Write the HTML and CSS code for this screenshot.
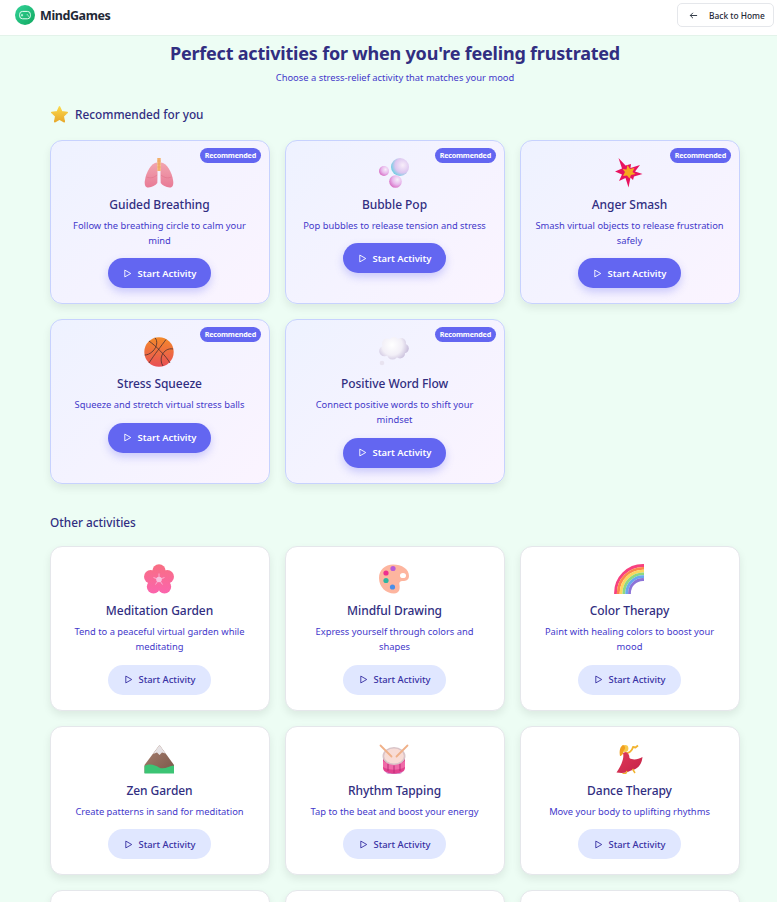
FILE: index.html
```html
<!DOCTYPE html>
<html lang="en">
<head>
<meta charset="utf-8">
<title>MindGames</title>
<link rel="stylesheet" href="styles.css">
</head>
<body>
<svg class="defs" aria-hidden="true">
  <defs>
    <symbol id="play" viewBox="0 0 10 10"><path d="M2 1.2 8.6 5 2 8.8Z" fill="none" stroke="currentColor" stroke-width="1" stroke-linejoin="round"/></symbol>
    <linearGradient id="gLung" x1="0" y1="0" x2="0" y2="1"><stop offset="0" stop-color="#f2a6b0"/><stop offset="1" stop-color="#e87a96"/></linearGradient>
    <radialGradient id="gBub" cx=".65" cy=".35" r=".7"><stop offset="0" stop-color="#f6effa"/><stop offset=".55" stop-color="#e8b8ec"/><stop offset="1" stop-color="#d86fc4"/></radialGradient>
    <radialGradient id="gBub2" cx=".65" cy=".4" r=".7"><stop offset="0" stop-color="#f8eefa"/><stop offset=".6" stop-color="#dcc6f0"/><stop offset="1" stop-color="#5fd0e0"/></radialGradient>
    <linearGradient id="gBall" x1="0" y1="0" x2="0" y2="1"><stop offset="0" stop-color="#f48a2a"/><stop offset="1" stop-color="#e84f55"/></linearGradient>
    <radialGradient id="gCloud" gradientUnits="userSpaceOnUse" cx="13" cy="8" r="17"><stop offset="0" stop-color="#ffffff"/><stop offset=".6" stop-color="#f2eff7"/><stop offset="1" stop-color="#c9bfdc"/></radialGradient>
    <linearGradient id="gFlower" gradientUnits="userSpaceOnUse" x1="0" y1="0" x2="0" y2="30"><stop offset="0" stop-color="#f86f82"/><stop offset="1" stop-color="#fb64ae"/></linearGradient>
    <linearGradient id="gMount" x1="0" y1="0" x2="1" y2="1"><stop offset="0" stop-color="#a88070"/><stop offset="1" stop-color="#7a5648"/></linearGradient>
    <linearGradient id="gStar" x1="0" y1="0" x2="0" y2="1"><stop offset="0" stop-color="#fbd84a"/><stop offset="1" stop-color="#e8a92c"/></linearGradient>
    <linearGradient id="gDress" x1="0" y1="0" x2="1" y2="1"><stop offset="0" stop-color="#e03a58"/><stop offset="1" stop-color="#c42248"/></linearGradient>
  </defs>
</svg>

<header class="topbar">
  <div class="brand">
    <span class="logo">
      <svg viewBox="0 0 20 20" class="logo-svg"><rect x="4.6" y="6.4" width="10.8" height="7.4" rx="3" fill="none" stroke="#e6fff3" stroke-width="1"/><path d="M7 9v2.4M5.900 10.200h2.200" stroke="#e6fff3" stroke-width=".8"/><circle cx="12.200" cy="9.800" r=".6" fill="#e6fff3"/><circle cx="13.400" cy="11" r=".6" fill="#e6fff3"/></svg>
    </span>
    <span class="brand-name">MindGames</span>
  </div>
  <button class="back">
    <svg viewBox="0 0 10 10" class="back-icon"><path d="M9 5H1.400M4.400 2 1.400 5l3 3" fill="none" stroke="#1f2937" stroke-width="1"/></svg>
    <span>Back to Home</span>
  </button>
</header>

<main class="page">
  <h1 class="title">Perfect activities for when you're feeling frustrated</h1>
  <p class="subtitle">Choose a stress-relief activity that matches your mood</p>

  <h2 class="section section-rec">
    <svg viewBox="0 0 16 16" class="star"><path d="M8 .8 10.100 5.500 15.300 6.100 11.500 9.600 12.500 14.800 8 12.300 3.500 14.800 4.500 9.600.7 6.100 5.900 5.500Z" fill="url(#gStar)" stroke="url(#gStar)" stroke-width="1.400" stroke-linejoin="round"/></svg>
    Recommended for you
  </h2>

  <div class="grid">
    <article class="card rec">
      <span class="badge">Recommended</span>
      <div class="icon"><svg viewBox="0 0 30 30" class="art">
        <path d="M13 4.500C7.500 4.500 2 14 .8 23c-.5 4 .7 6.800 3.700 6.500 3.500-.5 7-2 8.800-4.500.3-7 .3-15-.3-20.500Z" fill="url(#gLung)"/>
        <path d="M17 4.500C22.500 4.500 28 14 29.200 23c.5 4-.7 6.800-3.700 6.500-3.500-.5-7-2-8.800-4.500-.3-7-.3-15 .3-20.500Z" fill="url(#gLung)"/>
        <path d="M2.500 19c3.500 1.500 7 1 10.500-2M27.500 19c-3.500 1.500-7 1-10.500-2" stroke="#dc6f86" stroke-width=".5" fill="none"/>
        <rect x="13.300" y="0" width="3.400" height="13" fill="#f2b06c"/>
        <path d="M13.300 3h3.400M13.300 6h3.400M13.300 9h3.400" stroke="#e89a58" stroke-width=".5"/>
      </svg></div>
      <h3 class="name">Guided Breathing</h3>
      <p class="desc">Follow the breathing circle to calm your mind</p>
      <button class="start primary"><svg class="play"><use href="#play"/></svg>Start Activity</button>
    </article>

    <article class="card rec">
      <span class="badge">Recommended</span>
      <div class="icon"><svg viewBox="0 0 30 30" class="art">
        <circle cx="21" cy="9" r="9" fill="url(#gBub2)"/>
        <circle cx="5" cy="13" r="5" fill="url(#gBub)"/>
        <circle cx="16.500" cy="23.500" r="6.300" fill="url(#gBub)"/>
      </svg></div>
      <h3 class="name">Bubble Pop</h3>
      <p class="desc">Pop bubbles to release tension and stress</p>
      <button class="start primary"><svg class="play"><use href="#play"/></svg>Start Activity</button>
    </article>

    <article class="card rec">
      <span class="badge">Recommended</span>
      <div class="icon"><svg viewBox="0 0 30 30" class="art">
        <path d="M4.500 0 11.500 7.500 17 6 16.500 10 26 7 21 13.500 28.500 16 20 18.500 19 22 16.500 19.500 14.500 29.500 11.500 20 5 23 8 16.500 1 13.500 8 10.500Z" fill="#e8125f"/>
        <path d="M13.500 7 16 11 20.500 10 18.500 14 21.500 16 17 17 15.500 20.500 13 17.500 9 18 11 14 8.500 11 12.500 11.500Z" fill="#f6a81e"/>
      </svg></div>
      <h3 class="name">Anger Smash</h3>
      <p class="desc">Smash virtual objects to release frustration safely</p>
      <button class="start primary"><svg class="play"><use href="#play"/></svg>Start Activity</button>
    </article>

    <article class="card rec">
      <span class="badge">Recommended</span>
      <div class="icon"><svg viewBox="0 0 30 30" class="art">
        <circle cx="15" cy="15" r="14.700" fill="url(#gBall)"/>
        <g fill="none" stroke="#4a3030" stroke-width=".8">
          <path d="M5 4C12 9 22 19 26 26"/><path d="M22 2.500C18 8 10 18 5 26"/>
          <path d="M11 .8C14 4 13 10 9 14 6 17 3 18 .8 18"/><path d="M29 12C24 11 20 14 18 18 16.500 22 17 26 19 29"/>
        </g>
      </svg></div>
      <h3 class="name">Stress Squeeze</h3>
      <p class="desc">Squeeze and stretch virtual stress balls</p>
      <button class="start primary"><svg class="play"><use href="#play"/></svg>Start Activity</button>
    </article>

    <article class="card rec">
      <span class="badge">Recommended</span>
      <div class="icon"><svg viewBox="0 0 30 30" class="art">
        <g fill="url(#gCloud)">
          <circle cx="8" cy="6.500" r="5"/><circle cx="15" cy="5" r="5"/><circle cx="22" cy="6" r="5"/>
          <circle cx="25" cy="11.500" r="4.800"/><circle cx="21" cy="16.500" r="5"/><circle cx="13.500" cy="17" r="5.500"/>
          <circle cx="5.500" cy="14" r="5.300"/><circle cx="15" cy="11" r="8"/>
        </g>
        <circle cx="3" cy="26" r="2.300" fill="#e8e3f0"/>
      </svg></div>
      <h3 class="name">Positive Word Flow</h3>
      <p class="desc">Connect positive words to shift your mindset</p>
      <button class="start primary"><svg class="play"><use href="#play"/></svg>Start Activity</button>
    </article>
  </div>

  <h2 class="section section-other">Other activities</h2>

  <div class="grid">
    <article class="card">
      <div class="icon"><svg viewBox="0 0 30 30" class="art">
        <g fill="url(#gFlower)"><circle cx="15" cy="7" r="6.700"/><circle cx="6.700" cy="12.800" r="6.700"/><circle cx="23.300" cy="12.800" r="6.700"/><circle cx="9.500" cy="22.800" r="6.700"/><circle cx="20.500" cy="22.800" r="6.700"/><circle cx="15" cy="15" r="7"/></g>
        <circle cx="15" cy="15.500" r="2.800" fill="#f7c3e0"/>
        <path d="M15 15.500V9.500M15 15.500 9.500 13.500M15 15.500 20.500 13.500M15 15.500 11.500 20.500M15 15.500 18.500 20.500" stroke="#f7c3e0" stroke-width=".8"/>
      </svg></div>
      <h3 class="name">Meditation Garden</h3>
      <p class="desc">Tend to a peaceful virtual garden while meditating</p>
      <button class="start soft"><svg class="play"><use href="#play"/></svg>Start Activity</button>
    </article>

    <article class="card">
      <div class="icon"><svg viewBox="0 0 30 30" class="art">
        <path d="M14 .5C23 .5 30 5 30 12c0 4-3 5-6 5-3 0-4 1-3.500 4 .5 3 .5 8.500-5.500 8.500C7 29.500 0 23 0 14 0 6 6 .5 14 .5Z" fill="#fdb59f"/>
        <ellipse cx="24" cy="11.500" rx="3" ry="2.600" fill="#fff"/>
        <circle cx="14" cy="4.500" r="2.600" fill="#b85cd8"/><circle cx="7" cy="9" r="2.600" fill="#ee2f8f"/><circle cx="7" cy="16.500" r="2.600" fill="#2fb5a0"/><circle cx="13.500" cy="23" r="2.600" fill="#4a8ee8"/>
      </svg></div>
      <h3 class="name">Mindful Drawing</h3>
      <p class="desc">Express yourself through colors and shapes</p>
      <button class="start soft"><svg class="play"><use href="#play"/></svg>Start Activity</button>
    </article>

    <article class="card">
      <div class="icon"><svg viewBox="0 0 30 30" class="art">
        <g fill="none" stroke-width="2.800">
          <circle cx="29" cy="29" r="27.500" stroke="#f7417f"/>
          <circle cx="29" cy="29" r="24.700" stroke="#fb8a4a"/>
          <circle cx="29" cy="29" r="21.900" stroke="#fcd75e"/>
          <circle cx="29" cy="29" r="19.100" stroke="#8ed982"/>
          <circle cx="29" cy="29" r="16.300" stroke="#6aa8ee"/>
          <circle cx="29" cy="29" r="13.500" stroke="#8d74d8"/>
        </g>
      </svg></div>
      <h3 class="name">Color Therapy</h3>
      <p class="desc">Paint with healing colors to boost your mood</p>
      <button class="start soft"><svg class="play"><use href="#play"/></svg>Start Activity</button>
    </article>

    <article class="card">
      <div class="icon"><svg viewBox="0 0 30 30" class="art">
        <path d="M15.500 1 30 21V29H.5V21Z" fill="url(#gMount)"/>
        <path d="M15.500 1 21.500 9.500 18 8.500 15.500 11 13 8.500 9 10Z" fill="#e6e2e4"/>
        <path d="M.5 22C6 19 11 21 15 23.500 20 26 25 22 30 21.500V29.500H.5Z" fill="#3cc474"/>
      </svg></div>
      <h3 class="name">Zen Garden</h3>
      <p class="desc">Create patterns in sand for meditation</p>
      <button class="start soft"><svg class="play"><use href="#play"/></svg>Start Activity</button>
    </article>

    <article class="card">
      <div class="icon"><svg viewBox="0 0 30 30" class="art">
        <path d="M4 12H26V24C26 27.500 21 30 15 30S4 27.500 4 24Z" fill="#e2418e"/>
        <path d="M4 17C10 20.500 20 20.500 26 17V23C20 26.500 10 26.500 4 23Z" fill="#f06aa8"/>
        <path d="M9 20V27M15 21.500V29M21 20V27" stroke="#b82f78" stroke-width="1"/>
        <path d="M5.500 27C10 30.500 20 30.500 24.500 27L22 29.500C18 30.500 12 30.500 8 29.500Z" fill="#c890d0"/>
        <ellipse cx="15" cy="12" rx="11.500" ry="9" fill="#d9c4c8"/>
        <ellipse cx="15" cy="12" rx="9.800" ry="7.500" fill="#f8dcd6"/>
        <path d="M1.500 1.500 12.500 12.500M28.500 1.500 17.500 12.500" stroke="#f0b088" stroke-width="1.800" stroke-linecap="round"/>
      </svg></div>
      <h3 class="name">Rhythm Tapping</h3>
      <p class="desc">Tap to the beat and boost your energy</p>
      <button class="start soft"><svg class="play"><use href="#play"/></svg>Start Activity</button>
    </article>

    <article class="card">
      <div class="icon"><svg viewBox="0 0 30 30" class="art">
        <path d="M12 9C15 9.500 18 7 19 3L21.500 3.500 24 1.500" fill="none" stroke="#f2b430" stroke-width="1.800" stroke-linejoin="round"/>
        <path d="M9 9C10 13 9 19 2.500 28.500 8 29.500 13 29 17 26.500 23 25 27.500 22 28.500 13 24 15.500 19 16.500 15.500 14 15.500 11 14 8.500 11.500 8Z" fill="url(#gDress)"/>
        <path d="M13 27 11.500 29.800H8.500M18.500 25 21 29" fill="none" stroke="#f2b430" stroke-width="1.500"/>
        <circle cx="11" cy="4.500" r="3.400" fill="#f8c94c"/>
        <path d="M9 1C6 2.500 5 7 6 12 8 12 9.500 9.500 9.500 7 11 5 12.500 3 9 1Z" fill="#f0a020"/>
      </svg></div>
      <h3 class="name">Dance Therapy</h3>
      <p class="desc">Move your body to uplifting rhythms</p>
      <button class="start soft"><svg class="play"><use href="#play"/></svg>Start Activity</button>
    </article>

    <article class="card blank"></article>
    <article class="card blank"></article>
    <article class="card blank"></article>
  </div>
</main>
</body>
</html>
```
FILE: styles.css
```css
* { box-sizing: border-box; }
html, body { margin: 0; height: 902px; overflow: hidden; }
body {
  background: #edfdf4;
  font-family: "Noto Sans", "Open Sans", sans-serif;
  color: #312e81;
}
.defs { position: absolute; width: 0; height: 0; }

.topbar {
  height: 36px;
  background: #fff;
  border-bottom: 1px solid #e3f3ea;
  display: flex;
  align-items: flex-start;
  justify-content: space-between;
  padding: 3px 3px 0 15px;
}
.brand { display: flex; align-items: center; gap: 5px; height: 24px; }
.logo {
  width: 20px; height: 20px; border-radius: 50%;
  background: linear-gradient(135deg, #34d399, #10a85f);
  display: block;
}
.logo-svg { width: 20px; height: 20px; display: block; }
.brand-name { font-size: 12.500px; font-weight: 700; color: #1f2937; letter-spacing: -.4px; }
.back {
  width: 97px; height: 24px;
  background: #fff;
  border: 1px solid #e5e7eb;
  border-radius: 5px;
  display: flex; align-items: center; gap: 11px;
  padding: 0 0 0 11px;
  font: 500 8.400px "Noto Sans", sans-serif;
  color: #1f2937;
}
.back-icon { width: 9px; height: 9px; }

.page { padding: 0 37px 0 50px; }
.title {
  margin: 5px 0 0 -13px;
  width: 716px;
  text-align: center;
  font-size: 18px;
  line-height: 25px;
  font-weight: 700;
  letter-spacing: -.2px;
  color: #312e81;
}
.subtitle {
  margin: 4px 0 0 -13px;
  width: 716px;
  text-align: center;
  font-size: 9.400px;
  line-height: 15px;
  color: #4338ca;
}
.section {
  margin: 0;
  font-size: 11.800px;
  font-weight: 500;
  color: #312e81;
  line-height: 18px;
}
.section-rec { display: flex; align-items: center; gap: 7px; margin: 20px 0 16.600px 1px; }
.section-other { margin: 29.800px 0 15px; }
.star { width: 17px; height: 17px; display: block; }

.grid {
  display: grid;
  grid-template-columns: repeat(3, 220px);
  gap: 15px;
  align-items: stretch;
}
.card {
  position: relative;
  background: #fff;
  border: 1px solid #e5e7eb;
  border-radius: 12px;
  padding: 15px 14px 15px 13px;
  display: flex;
  flex-direction: column;
  align-items: center;
  text-align: center;
  box-shadow: 0 4px 8px rgba(0, 0, 0, .08);
}
.card.rec {
  background: linear-gradient(135deg, #eef2ff, #fbf4ff);
  border-color: #c7d2fe;
}
.card.blank { height: 150px; }
.badge {
  position: absolute;
  top: 7px; right: 8px;
  height: 15px;
  padding: 0 5px;
  border-radius: 8px;
  background: #6366f1;
  color: #fff;
  font-size: 7.200px;
  font-weight: 700;
  line-height: 15px;
  letter-spacing: -.2px;
}
.icon { height: 32px; display: flex; align-items: flex-end; justify-content: center; margin-left: -1px; }
.art { width: 30px; height: 30px; display: block; }
.name {
  margin: 8px 0 3.500px;
  font-size: 12px;
  line-height: 18.500px;
  font-weight: 500;
  letter-spacing: -.05px;
  color: #312e81;
}
.desc {
  margin: 0 0 10.500px;
  font-size: 9.350px;
  line-height: 15px;
  color: #4338ca;
}
.start {
  width: 103px; height: 30px;
  border: 0;
  border-radius: 15px;
  display: flex; align-items: center; justify-content: center; gap: 6px;
  font: 600 9.400px "Noto Sans", sans-serif;
}
.start.primary { background: #6366f1; color: #fff; box-shadow: 0 4px 9px rgba(99, 102, 241, .3); }
.start.soft { background: #e0e7ff; color: #3730a3; font-weight: 500; }
.play { width: 9px; height: 9px; display: block; }
```
